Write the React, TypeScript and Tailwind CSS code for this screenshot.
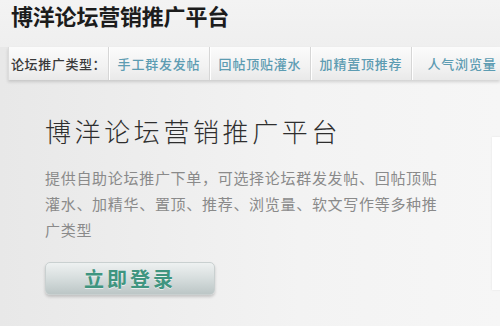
const TABS = ["手工群发发帖", "回帖顶贴灌水", "加精置顶推荐", "人气浏览量"];

const FONT = "font-['Noto_Sans_CJK_SC','Noto_Sans',sans-serif]";

export default function App() {
  return (
    <div className={`relative h-[326px] w-[500px] overflow-hidden bg-[linear-gradient(90deg,#e8e8e8,#f3f3f3_60%,#f6f6f6)] ${FONT}`}>
      {/* Header */}
      <div className="h-[47px] bg-[linear-gradient(180deg,#f3f3f3,#efefef)] pl-[11px] pt-[3px]">
        <h1 className="text-[22px] font-bold leading-[24px] tracking-[-0.2px] text-[#1c1c1c]">
          博洋论坛营销推广平台
        </h1>
      </div>

      {/* Category bar */}
      <div className="ml-[8px] flex h-[33px] items-stretch bg-[linear-gradient(180deg,#fbfbfb,#f2f2f2_60%,#e9e9e9)] shadow-[0_2px_3px_rgba(0,0,0,0.15)]">
        <div className="flex w-[100px] shrink-0 items-center whitespace-nowrap border-l border-[#dcdcdc] pl-[2px] text-[13px] font-medium tracking-[0.6px] text-[#3a3a3a]">
          论坛推广类型：
        </div>
        {TABS.map((t) => (
          <div
            key={t}
            className="flex w-[101px] shrink-0 items-center justify-center whitespace-nowrap border-l border-[#d6d6d6] text-[13px] font-medium tracking-[0.8px] text-[#5d9cb2] shadow-[inset_1px_0_0_#ffffff]"
          >
            {t}
          </div>
        ))}
      </div>

      {/* Main */}
      <div className="flex">
        <div className="w-[492px] shrink-0 pl-[45px] pt-[35px]">
          <h2 className="text-[26px] font-light leading-[32px] tracking-[3.6px] text-[#2e2e2e]">
            博洋论坛营销推广平台
          </h2>
          <p className="mt-[18px] w-[400px] text-[15px] leading-[26px] tracking-[0.7px] text-[#8a8a8a]">
            提供自助论坛推广下单，可选择论坛群发发帖、回帖顶贴灌水、加精华、置顶、推荐、浏览量、软文写作等多种推广类型
          </p>
          <button className="mt-[19px] flex h-[33px] w-[170px] items-center justify-center rounded-[5px] border border-[#c9d0d0] bg-[linear-gradient(180deg,#eef1f1,#d6dddd_50%,#bcc6c6)] text-[20px] font-bold tracking-[3px] text-[#3f9580] shadow-[0_2px_3px_rgba(0,0,0,0.18)] [text-shadow:0_1px_0_rgba(255,255,255,0.6)]">
            立即登录
          </button>
        </div>
        <div className="mt-[57px] h-[153px] w-[60px] shrink-0 bg-white shadow-[0_0_2px_rgba(0,0,0,0.08)]" />
      </div>
    </div>
  );
}
